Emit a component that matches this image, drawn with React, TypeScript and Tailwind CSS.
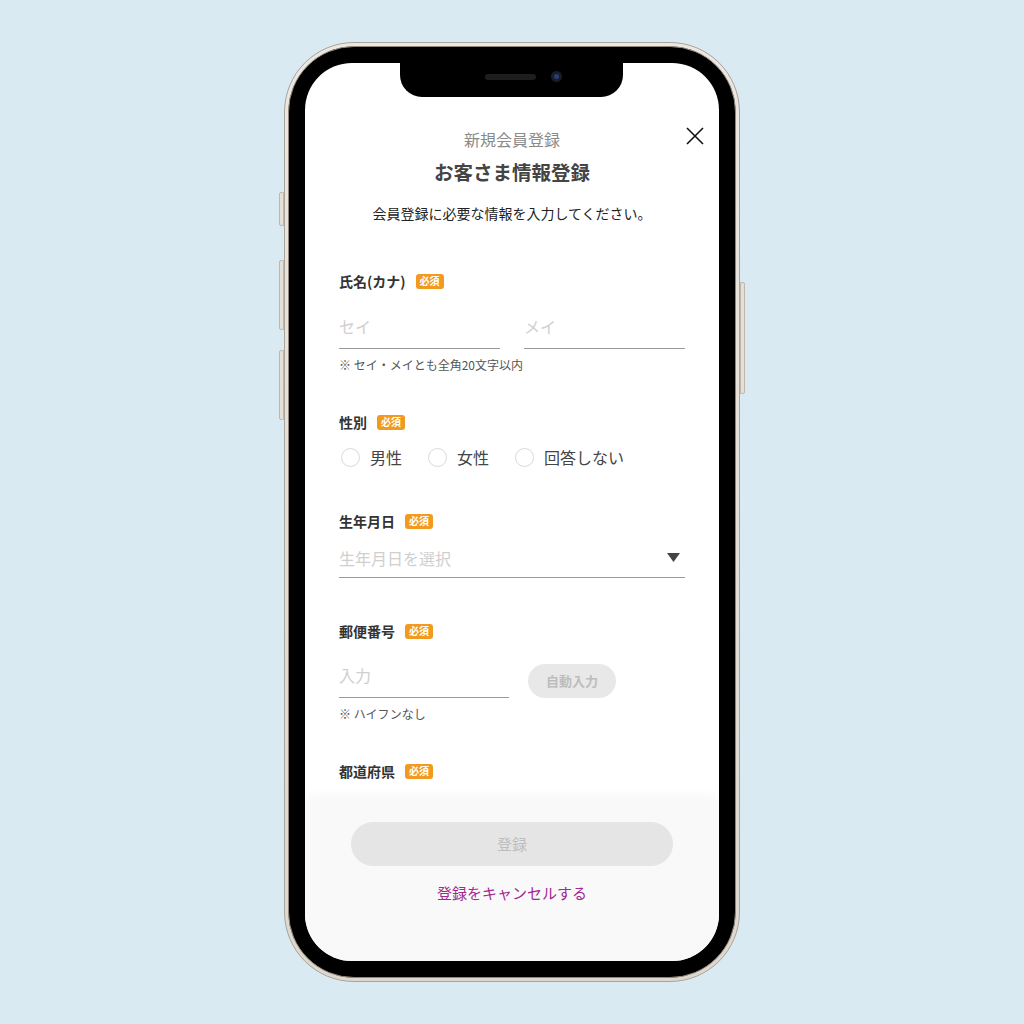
const font = { fontFamily: '"Noto Sans CJK JP", "Noto Sans", sans-serif' };

function Badge() {
  return (
    <span className="ml-[10px] inline-flex h-[15px] items-center rounded-[3px] bg-[#f29a1f] px-[4px] text-[10px] font-bold leading-none text-white">
      必須
    </span>
  );
}

function Label({ text }: { text: string }) {
  return (
    <div className="flex h-[20px] items-center">
      <span className="text-[14px] font-bold leading-[20px] text-[#333]">{text}</span>
      <Badge />
    </div>
  );
}

function TextInput({ placeholder, className }: { placeholder: string; className?: string }) {
  return (
    <div className={"flex h-[45px] items-center border-b border-[#9a9a9a] " + (className ?? "")}>
      <span className="text-[16px] leading-[22px] text-[#cfcfcf]">{placeholder}</span>
    </div>
  );
}

function Radio({ text }: { text: string }) {
  return (
    <div className="flex items-center">
      <span className="h-[19px] w-[19px] rounded-full border border-[#d9d9d9] bg-white" />
      <span className="ml-[10px] text-[16px] leading-[24px] text-[#444]">{text}</span>
    </div>
  );
}

export default function App() {
  return (
    <div className="flex h-[1024px] w-full items-center justify-center bg-[#d9eaf2]" style={font}>
      <div className="relative h-[940px] w-[456px] rounded-[70px] border border-[#a9a39a] bg-gradient-to-b from-[#ece8e1] to-[#ddd7cd] p-[3px]">
        {/* side buttons */}
        <span className="absolute left-[-6px] top-[149px] h-[34px] w-[5px] rounded-l-[2px] border border-[#bdb7ae] bg-[#e4dfd7]" />
        <span className="absolute left-[-6px] top-[217px] h-[70px] w-[5px] rounded-l-[2px] border border-[#bdb7ae] bg-[#e4dfd7]" />
        <span className="absolute left-[-6px] top-[307px] h-[70px] w-[5px] rounded-l-[2px] border border-[#bdb7ae] bg-[#e4dfd7]" />
        <span className="absolute right-[-6px] top-[239px] h-[112px] w-[5px] rounded-r-[2px] border border-[#bdb7ae] bg-[#e4dfd7]" />

        <div className="h-full w-full rounded-[66px] border border-[#8d877e] bg-black p-[16px]">
          <div className="relative flex h-full w-full flex-col overflow-hidden rounded-[47px] bg-white">
            {/* notch */}
            <div className="absolute left-[95px] top-0 z-10 flex h-[34px] w-[223px] items-start justify-center rounded-b-[22px] bg-black">
              <span className="ml-[24px] mt-[11px] h-[6px] w-[51px] rounded-full bg-[#1e1e1e]" />
              <span className="ml-[15px] mt-[8px] flex h-[11px] w-[11px] items-center justify-center rounded-full bg-[#1a1c2a]">
                <span className="h-[5px] w-[5px] rounded-full bg-[#2b3d78]" />
              </span>
            </div>

            {/* content */}
            <div className="flex-1 overflow-hidden px-[34px]">
              <div className="relative pt-[64px]">
                <p className="text-center text-[16px] leading-[24px] text-[#8a8a8a]">新規会員登録</p>
                <svg
                  className="absolute right-[-20px] top-[63px]"
                  width="20"
                  height="20"
                  viewBox="0 0 20 20"
                  fill="none"
                  stroke="#111"
                  strokeWidth="1.6"
                >
                  <path d="M2 2L18 18M18 2L2 18" />
                </svg>
              </div>
              <h1 className="mt-[7px] text-center text-[19.5px] font-bold leading-[28px] text-[#444]">お客さま情報登録</h1>
              <p className="mt-[17px] text-center text-[14px] leading-[20px] text-[#222]">
                会員登録に必要な情報を入力してください。
              </p>

              {/* name */}
              <div className="mt-[48px]">
                <Label text="氏名(カナ)" />
                <div className="mt-[13px] flex gap-[24px]">
                  <TextInput placeholder="セイ" className="flex-1" />
                  <TextInput placeholder="メイ" className="flex-1" />
                </div>
                <p className="mt-[8px] text-[12px] leading-[16px] text-[#555]">※ セイ・メイとも全角20文字以内</p>
              </div>

              {/* gender */}
              <div className="mt-[39px]">
                <Label text="性別" />
                <div className="mt-[13px] flex gap-[26px] pl-[2px]">
                  <Radio text="男性" />
                  <Radio text="女性" />
                  <Radio text="回答しない" />
                </div>
              </div>

              {/* birthday */}
              <div className="mt-[42px]">
                <Label text="生年月日" />
                <div className="mt-[7px] flex h-[40px] items-center justify-between border-b border-[#9a9a9a]">
                  <span className="text-[16px] leading-[22px] text-[#cfcfcf]">生年月日を選択</span>
                  <svg className="mr-[5px]" width="13" height="9" viewBox="0 0 13 9">
                    <path d="M0 0H13L6.5 9Z" fill="#444" />
                  </svg>
                </div>
              </div>

              {/* zip */}
              <div className="mt-[43px]">
                <Label text="郵便番号" />
                <div className="mt-[12px] flex items-end">
                  <TextInput placeholder="入力" className="w-[170px]" />
                  <button className="ml-[19px] h-[34px] w-[88px] rounded-full bg-[#e8e8e8] text-[13px] font-bold text-[#bdbdbd]">
                    自動入力
                  </button>
                </div>
                <p className="mt-[8px] text-[12px] leading-[16px] text-[#555]">※ ハイフンなし</p>
              </div>

              {/* prefecture */}
              <div className="mt-[39px]">
                <Label text="都道府県" />
              </div>
            </div>

            {/* footer */}
            <div className="flex h-[160px] shrink-0 flex-col items-center bg-[#f9f9f9] px-[46px] pt-[21px] shadow-[0_-6px_10px_rgba(0,0,0,0.03)]">
              <button className="h-[44px] w-full rounded-full bg-[#e5e5e5] text-[15px] text-[#bdbdbd]">登録</button>
              <a className="mt-[16px] text-[15px] leading-[22px] text-[#a3288f]">登録をキャンセルする</a>
            </div>
          </div>
        </div>
      </div>
    </div>
  );
}
